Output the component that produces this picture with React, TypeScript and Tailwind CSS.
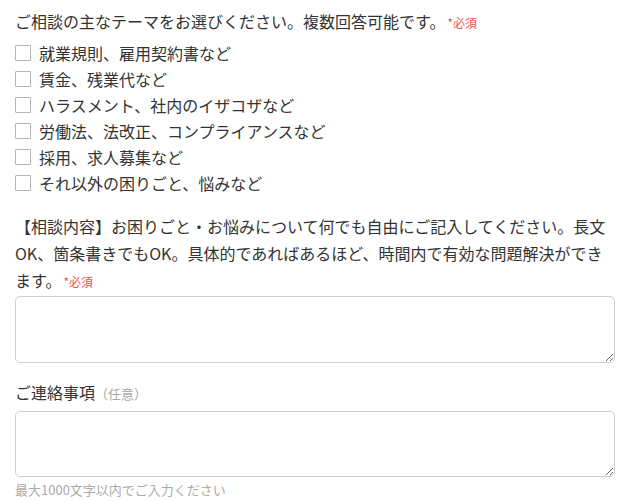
import React from "react";

const themes = [
    "就業規則、雇用契約書など",
    "賃金、残業代など",
    "ハラスメント、社内のイザコザなど",
    "労働法、法改正、コンプライアンスなど",
    "採用、求人募集など",
    "それ以外の困りごと、悩みなど",
];

const Required = () => (
    <span className="ml-[2px] text-[12px] leading-none text-[#e85454]">*必須</span>
);

const App = () => {
    return (
        <div
            className="w-[631px] min-h-[502px] bg-white pl-[15px] pr-[16px] pt-[8px] text-[#333] text-[16px]"
            style={{ fontFamily: '"Noto Sans CJK JP", "Noto Sans", sans-serif' }}
        >
            <p className="leading-[27px]">
                ご相談の主なテーマをお選びください。複数回答可能です。
                <Required />
            </p>

            <div className="mt-[5px] flex flex-col">
                {themes.map((t) => (
                    <label key={t} className="flex flex-row items-center gap-[8px] h-[26px]">
                        <span className="w-[16px] h-[16px] border border-[#b5b5b5] rounded-[1px] bg-white shrink-0" />
                        <span className="leading-[26px]">{t}</span>
                    </label>
                ))}
            </div>

            <p className="mt-[17px] leading-[27px]">
                【相談内容】お困りごと・お悩みについて何でも自由にご記入してください。長文OK、箇条書きでもOK。具体的であればあるほど、時間内で有効な問題解決ができます。
                <Required />
            </p>
            <textarea className="mt-[2px] block w-[600px] h-[67px] border border-[#cfcfcf] rounded-[5px] outline-none" />

            <p className="mt-[16px] leading-[27px]">
                ご連絡事項<span className="text-[13px] text-[#aaa]">（任意）</span>
            </p>
            <textarea className="mt-[4px] block w-[600px] h-[66px] border border-[#cfcfcf] rounded-[5px] outline-none" />
            <p className="mt-[4px] text-[13px] leading-[18px] text-[#aaa]">
                最大1000文字以内でご入力ください
            </p>
        </div>
    );
};

export default App;
